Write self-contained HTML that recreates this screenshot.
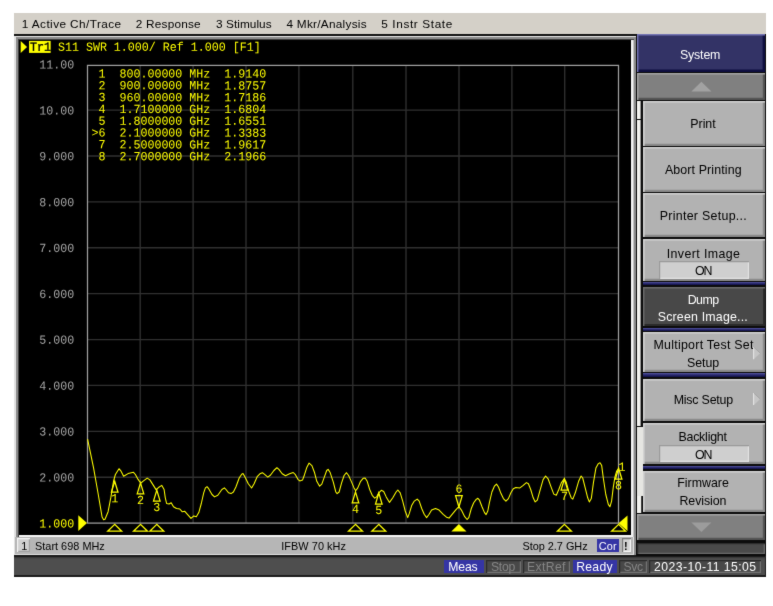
<!DOCTYPE html>
<html>
<head>
<meta charset="utf-8">
<title>E5071C Network Analyzer</title>
<style>
html,body{margin:0;padding:0;background:#fff;}
body{width:773px;height:606px;position:relative;overflow:hidden;font-family:"Liberation Sans",sans-serif;}
#all{position:absolute;left:0;top:0;width:773px;height:606px;background:#fff;filter:url(#soft);}
.b{position:absolute;}
svg{position:absolute;left:0;top:0;}
</style>
</head>
<body>
<svg width="0" height="0" style="position:absolute"><defs><filter id="soft" x="0" y="0" width="100%" height="100%" color-interpolation-filters="sRGB"><feConvolveMatrix order="3" kernelMatrix="0.012 0.07 0.012 0.07 0.672 0.07 0.012 0.07 0.012" divisor="1" edgeMode="duplicate" preserveAlpha="true"/></filter></defs></svg>
<div id="all">
<!-- outer black backing -->
<div class="b" style="left:14.00px;top:34.00px;width:752.10px;height:543.30px;background:#141414;"></div>
<!-- menu bar -->
<div class="b" style="left:14.00px;top:13.00px;width:752.10px;height:21.25px;background:#d4d0c8;"></div>
<!-- plot frame -->
<div class="b" style="left:14.00px;top:35.60px;width:621.70px;height:519.70px;background:#e2e2e2;"></div>
<div class="b" style="left:16.20px;top:37.30px;width:619.50px;height:499.30px;background:#8c8c8c;"></div>
<div class="b" style="left:17.60px;top:38.70px;width:616.60px;height:497.90px;background:#404040;"></div>
<div class="b" style="left:18.90px;top:40.10px;width:615.30px;height:496.50px;background:#c4c4c4;"></div>
<div class="b" style="left:18.90px;top:40.10px;width:613.80px;height:496.50px;background:#f4f4f4;"></div>
<div class="b" style="left:18.90px;top:40.10px;width:611.80px;height:494.90px;background:#000;"></div>
<div class="b" style="left:634.20px;top:536.60px;width:1.50px;height:18.70px;background:#8c8c8c;"></div>
<!-- channel bar -->
<div class="b" style="left:14.60px;top:536.60px;width:618.40px;height:17.20px;background:#b6b6b6;"></div>
<div class="b" style="left:16.80px;top:537.90px;width:13.50px;height:14.00px;background:#d0d0d0;box-shadow:inset 1.2px 1.2px 0 #f4f4f4,inset -1.2px -1.2px 0 #a2a2a2;"></div>
<div class="b" style="left:596.50px;top:539.00px;width:22.50px;height:12.90px;background:#3535a5;"></div>
<div class="b" style="left:621.60px;top:538.20px;width:9.40px;height:14.20px;background:#d2d2d2;box-shadow:inset 1.2px 1.2px 0 #7a7a7a,inset -1.2px -1.2px 0 #f6f6f6;"></div>
<!-- status bar -->
<div class="b" style="left:14.00px;top:555.40px;width:752.10px;height:21.90px;background:#1c1c1c;"></div>
<div class="b" style="left:14.00px;top:556.80px;width:750.90px;height:18.70px;background:#4e4e4e;box-shadow:inset 0 1.2px 0 #3a3a3a;"></div>
<div class="b" style="left:443.50px;top:559.80px;width:40.60px;height:13.30px;background:#3535a5;"></div>
<div class="b" style="left:486.20px;top:559.60px;width:34.50px;height:13.60px;background:#484848;box-shadow:inset 1.2px 1.2px 0 #2a2a2a,inset -1.2px -1.2px 0 #727272;"></div>
<div class="b" style="left:522.80px;top:559.60px;width:47.30px;height:13.60px;background:#484848;box-shadow:inset 1.2px 1.2px 0 #2a2a2a,inset -1.2px -1.2px 0 #727272;"></div>
<div class="b" style="left:572.80px;top:559.80px;width:44.40px;height:13.30px;background:#3535a5;"></div>
<div class="b" style="left:619.30px;top:559.60px;width:28.00px;height:13.60px;background:#484848;box-shadow:inset 1.2px 1.2px 0 #2a2a2a,inset -1.2px -1.2px 0 #727272;"></div>
<div class="b" style="left:649.30px;top:559.60px;width:111.80px;height:13.60px;background:#484848;box-shadow:inset 1.2px 1.2px 0 #2a2a2a,inset -1.2px -1.2px 0 #727272;"></div>
<!-- softkey column -->
<div class="b" style="left:635.70px;top:34.40px;width:130.40px;height:521.20px;background:#0c0c0c;"></div>
<div class="b" style="left:636.90px;top:34.40px;width:127.90px;height:38.00px;background:#333366;box-shadow:inset 1.4px 1.4px 0 #7474b4,inset -2.4px -2.4px 0 #0e0e40;"></div>
<div class="b" style="left:636.90px;top:72.90px;width:127.90px;height:27.20px;background:#808080;box-shadow:inset 1.4px 1.4px 0 #a4a4a4,inset -2.2px -2.2px 0 #555555;"></div>
<div class="b" style="left:636.90px;top:514.10px;width:127.90px;height:26.30px;background:#808080;box-shadow:inset 1.4px 1.4px 0 #a4a4a4,inset -2.2px -2.2px 0 #555555;"></div>
<div class="b" style="left:636.60px;top:543.00px;width:128.30px;height:11.20px;background:#4a4a4a;box-shadow:inset 1.3px 1.3px 0 #2c2c2c,inset -1.3px -1.3px 0 #6a6a6a;"></div>
<!-- scrollbar -->
<div class="b" style="left:636.90px;top:101.20px;width:4.40px;height:17.50px;background:#f2f2ee;box-shadow:inset -0.9px 0 0 #8c8c8c;"></div>
<div class="b" style="left:636.90px;top:119.60px;width:4.40px;height:306.40px;background:#f2f2ee;box-shadow:inset -0.9px 0 0 #8c8c8c;"></div>
<div class="b" style="left:636.90px;top:427.00px;width:5.70px;height:69.20px;background:#e6e6e2;"></div>
<div class="b" style="left:636.90px;top:496.20px;width:4.10px;height:16.80px;background:#f2f2ee;"></div>
<div class="b" style="left:641.00px;top:496.20px;width:1.40px;height:16.80px;background:#404040;"></div>
<div class="b" style="left:642.50px;top:101.00px;width:122.30px;height:44.60px;background:#b2b2b2;box-shadow:inset 1.6px 1.6px 0 #d2d2d2,inset -2.2px -2.2px 0 #8a8a8a;"></div>
<div class="b" style="left:642.50px;top:147.10px;width:122.30px;height:44.60px;background:#b2b2b2;box-shadow:inset 1.6px 1.6px 0 #d2d2d2,inset -2.2px -2.2px 0 #8a8a8a;"></div>
<div class="b" style="left:642.50px;top:193.10px;width:122.30px;height:44.40px;background:#b2b2b2;box-shadow:inset 1.6px 1.6px 0 #d2d2d2,inset -2.2px -2.2px 0 #8a8a8a;"></div>
<div class="b" style="left:642.50px;top:238.90px;width:122.30px;height:42.50px;background:#b2b2b2;box-shadow:inset 1.6px 1.6px 0 #d2d2d2,inset -2.2px -2.2px 0 #8a8a8a;"></div>
<div class="b" style="left:642.50px;top:286.90px;width:122.30px;height:39.50px;background:#484848;box-shadow:inset 1.4px 1.4px 0 #6c6c6c,inset -2.0px -2.0px 0 #2a2a2a;"></div>
<div class="b" style="left:642.50px;top:331.90px;width:122.30px;height:39.70px;background:#b2b2b2;box-shadow:inset 1.6px 1.6px 0 #d2d2d2,inset -2.2px -2.2px 0 #8a8a8a;"></div>
<div class="b" style="left:642.50px;top:379.00px;width:122.30px;height:42.00px;background:#b2b2b2;box-shadow:inset 1.6px 1.6px 0 #d2d2d2,inset -2.2px -2.2px 0 #8a8a8a;"></div>
<div class="b" style="left:642.50px;top:422.60px;width:122.30px;height:41.90px;background:#b2b2b2;box-shadow:inset 1.6px 1.6px 0 #d2d2d2,inset -2.2px -2.2px 0 #8a8a8a;"></div>
<div class="b" style="left:642.50px;top:470.90px;width:122.30px;height:41.50px;background:#b2b2b2;box-shadow:inset 1.6px 1.6px 0 #d2d2d2,inset -2.2px -2.2px 0 #8a8a8a;"></div>
<div class="b" style="left:642.50px;top:282.30px;width:122.30px;height:2.80px;background:linear-gradient(#5c5ca6 0%,#34347c 35%,#0e0e44 100%);"></div>
<div class="b" style="left:642.50px;top:327.70px;width:122.30px;height:2.90px;background:linear-gradient(#5c5ca6 0%,#34347c 35%,#0e0e44 100%);"></div>
<div class="b" style="left:642.50px;top:373.40px;width:122.30px;height:3.80px;background:linear-gradient(#5c5ca6 0%,#34347c 35%,#0e0e44 100%);"></div>
<div class="b" style="left:642.50px;top:466.00px;width:122.30px;height:3.30px;background:linear-gradient(#5c5ca6 0%,#34347c 35%,#0e0e44 100%);"></div>
<div class="b" style="left:659.00px;top:261.30px;width:90.40px;height:17.30px;background:#cfcfcf;box-shadow:inset 1.2px 1.2px 0 #9a9a9a,inset -1.2px -1.2px 0 #e2e2e2;"></div>
<div class="b" style="left:659.00px;top:445.10px;width:90.40px;height:17.20px;background:#cfcfcf;box-shadow:inset 1.2px 1.2px 0 #9a9a9a,inset -1.2px -1.2px 0 #e2e2e2;"></div>
<svg width="773" height="606" viewBox="0 0 773 606">
<g stroke="#303030" stroke-width="1.35" fill="none"><line x1="140.20" y1="65.40" x2="140.20" y2="523.10"/><line x1="87.50" y1="110.10" x2="618.50" y2="110.10"/><line x1="193.10" y1="65.40" x2="193.10" y2="523.10"/><line x1="87.50" y1="155.99" x2="618.50" y2="155.99"/><line x1="246.00" y1="65.40" x2="246.00" y2="523.10"/><line x1="87.50" y1="201.88" x2="618.50" y2="201.88"/><line x1="298.90" y1="65.40" x2="298.90" y2="523.10"/><line x1="87.50" y1="247.77" x2="618.50" y2="247.77"/><line x1="352.80" y1="65.40" x2="352.80" y2="523.10"/><line x1="87.50" y1="293.66" x2="618.50" y2="293.66"/><line x1="406.00" y1="65.40" x2="406.00" y2="523.10"/><line x1="87.50" y1="339.55" x2="618.50" y2="339.55"/><line x1="459.00" y1="65.40" x2="459.00" y2="523.10"/><line x1="87.50" y1="385.44" x2="618.50" y2="385.44"/><line x1="511.90" y1="65.40" x2="511.90" y2="523.10"/><line x1="87.50" y1="431.33" x2="618.50" y2="431.33"/><line x1="564.70" y1="65.40" x2="564.70" y2="523.10"/><line x1="87.50" y1="477.22" x2="618.50" y2="477.22"/></g>
<rect x="87.50" y="65.40" width="531.00" height="457.70" fill="none" stroke="#a0a0a0" stroke-width="1.25"/>
<text transform="translate(74.30,68.50) rotate(0.03) scale(1,1.06)" x="0" y="0" font-family="Liberation Mono, monospace" font-size="11.67" fill="#a4a4a4" text-anchor="end" xml:space="preserve"  >11.00</text>
<text transform="translate(74.30,114.40) rotate(0.03) scale(1,1.06)" x="0" y="0" font-family="Liberation Mono, monospace" font-size="11.67" fill="#a4a4a4" text-anchor="end" xml:space="preserve"  >10.00</text>
<text transform="translate(74.30,160.29) rotate(0.03) scale(1,1.06)" x="0" y="0" font-family="Liberation Mono, monospace" font-size="11.67" fill="#a4a4a4" text-anchor="end" xml:space="preserve"  >9.000</text>
<text transform="translate(74.30,206.18) rotate(0.03) scale(1,1.06)" x="0" y="0" font-family="Liberation Mono, monospace" font-size="11.67" fill="#a4a4a4" text-anchor="end" xml:space="preserve"  >8.000</text>
<text transform="translate(74.30,252.07) rotate(0.03) scale(1,1.06)" x="0" y="0" font-family="Liberation Mono, monospace" font-size="11.67" fill="#a4a4a4" text-anchor="end" xml:space="preserve"  >7.000</text>
<text transform="translate(74.30,297.96) rotate(0.03) scale(1,1.06)" x="0" y="0" font-family="Liberation Mono, monospace" font-size="11.67" fill="#a4a4a4" text-anchor="end" xml:space="preserve"  >6.000</text>
<text transform="translate(74.30,343.85) rotate(0.03) scale(1,1.06)" x="0" y="0" font-family="Liberation Mono, monospace" font-size="11.67" fill="#a4a4a4" text-anchor="end" xml:space="preserve"  >5.000</text>
<text transform="translate(74.30,389.74) rotate(0.03) scale(1,1.06)" x="0" y="0" font-family="Liberation Mono, monospace" font-size="11.67" fill="#a4a4a4" text-anchor="end" xml:space="preserve"  >4.000</text>
<text transform="translate(74.30,435.63) rotate(0.03) scale(1,1.06)" x="0" y="0" font-family="Liberation Mono, monospace" font-size="11.67" fill="#a4a4a4" text-anchor="end" xml:space="preserve"  >3.000</text>
<text transform="translate(74.30,481.52) rotate(0.03) scale(1,1.06)" x="0" y="0" font-family="Liberation Mono, monospace" font-size="11.67" fill="#a4a4a4" text-anchor="end" xml:space="preserve"  >2.000</text>
<text transform="translate(74.30,527.41) rotate(0.03) scale(1,1.06)" x="0" y="0" font-family="Liberation Mono, monospace" font-size="11.67" fill="#ffff00" text-anchor="end" xml:space="preserve"  >1.000</text>
<polygon points="78.3,515.3 87.0,523.1 78.3,530.9" fill="#ffff00"/>
<polygon points="20.7,40.9 27.1,46.9 20.7,52.9" fill="#ffff00"/>
<rect x="29.05" y="40.9" width="21.6" height="12" fill="#ffff00"/>
<text transform="translate(29.90,50.70) rotate(0.03) scale(1,1.06)" x="0" y="0" font-family="Liberation Mono, monospace" font-size="11.67" fill="#000" text-anchor="start" xml:space="preserve"  stroke="#000" stroke-width="0.35">Tr1</text>
<text transform="translate(29.90,50.70) rotate(0.03) scale(1,1.06)" x="0" y="0" font-family="Liberation Mono, monospace" font-size="11.67" fill="#ffff00" text-anchor="start" xml:space="preserve"  >    S11 SWR 1.000/ Ref 1.000 [F1]</text>
<text transform="translate(91.40,77.50) rotate(0.03) scale(1,1.06)" x="0" y="0" font-family="Liberation Mono, monospace" font-size="11.67" fill="#ffff00" text-anchor="start" xml:space="preserve"  > 1  800.00000 MHz  1.9140</text>
<text transform="translate(91.40,89.31) rotate(0.03) scale(1,1.06)" x="0" y="0" font-family="Liberation Mono, monospace" font-size="11.67" fill="#ffff00" text-anchor="start" xml:space="preserve"  > 2  900.00000 MHz  1.8757</text>
<text transform="translate(91.40,101.12) rotate(0.03) scale(1,1.06)" x="0" y="0" font-family="Liberation Mono, monospace" font-size="11.67" fill="#ffff00" text-anchor="start" xml:space="preserve"  > 3  960.00000 MHz  1.7186</text>
<text transform="translate(91.40,112.93) rotate(0.03) scale(1,1.06)" x="0" y="0" font-family="Liberation Mono, monospace" font-size="11.67" fill="#ffff00" text-anchor="start" xml:space="preserve"  > 4  1.7100000 GHz  1.6804</text>
<text transform="translate(91.40,124.74) rotate(0.03) scale(1,1.06)" x="0" y="0" font-family="Liberation Mono, monospace" font-size="11.67" fill="#ffff00" text-anchor="start" xml:space="preserve"  > 5  1.8000000 GHz  1.6551</text>
<text transform="translate(91.40,136.55) rotate(0.03) scale(1,1.06)" x="0" y="0" font-family="Liberation Mono, monospace" font-size="11.67" fill="#ffff00" text-anchor="start" xml:space="preserve"  >&gt;6  2.1000000 GHz  1.3383</text>
<text transform="translate(91.40,148.36) rotate(0.03) scale(1,1.06)" x="0" y="0" font-family="Liberation Mono, monospace" font-size="11.67" fill="#ffff00" text-anchor="start" xml:space="preserve"  > 7  2.5000000 GHz  1.9617</text>
<text transform="translate(91.40,160.17) rotate(0.03) scale(1,1.06)" x="0" y="0" font-family="Liberation Mono, monospace" font-size="11.67" fill="#ffff00" text-anchor="start" xml:space="preserve"  > 8  2.7000000 GHz  2.1966</text>
<polyline points="87.6,439.1 93.6,468.1 98.1,493.5 102.1,517.1 103.6,519.8 105.0,519.3 108.1,511.7 110.9,497.2 113.6,480.8 115.4,474.5 119.0,468.7 120.8,470.8 123.6,476.3 128.1,473.6 133.5,472.3 135.4,474.5 138.1,479.4 140.8,483.2 143.5,480.8 147.2,478.1 149.9,479.9 152.6,484.1 156.2,489.9 158.9,487.2 161.8,485.4 164.1,489.5 165.3,497.8 166.6,503.5 169.1,504.0 171.2,502.7 173.5,506.8 176.5,508.5 179.8,509.0 182.3,511.8 184.8,511.3 188.1,515.1 191.0,518.4 193.8,515.9 196.3,516.7 198.8,512.6 201.3,503.5 203.7,492.8 205.4,487.9 207.0,486.7 208.7,488.7 212.0,494.5 214.5,496.9 217.8,495.3 221.9,489.5 224.4,487.9 226.0,489.5 228.5,492.8 231.0,493.6 233.4,492.0 235.9,487.0 239.2,478.0 241.7,474.2 243.0,473.5 245.0,477.1 248.3,483.7 251.6,488.0 254.1,483.7 257.4,476.3 259.9,473.8 262.4,472.7 264.9,474.7 267.8,477.1 270.6,475.0 273.9,470.5 276.9,467.7 278.9,469.4 282.2,473.8 285.5,475.8 289.6,473.8 293.2,472.5 295.4,474.7 297.9,479.3 299.8,480.9 302.5,480.1 304.5,474.7 306.9,467.2 309.1,463.1 311.9,465.6 314.4,472.2 316.8,481.3 319.6,486.2 321.8,484.2 324.3,477.1 326.7,470.5 328.1,469.4 330.0,472.2 333.3,482.1 335.8,492.0 337.1,493.6 339.1,492.0 341.6,482.9 344.1,475.5 346.5,472.7 348.6,475.5 351.6,482.1 354.0,487.9 355.7,490.8 357.8,487.9 360.6,481.3 363.1,478.3 365.1,478.0 367.2,481.3 369.7,489.5 372.2,495.3 374.7,498.1 376.6,496.9 378.8,492.8 381.3,490.3 383.7,491.5 386.2,496.9 389.5,502.4 392.8,497.8 396.1,492.0 397.8,490.0 400.2,492.8 402.7,501.1 405.2,511.0 407.7,517.6 409.3,513.4 411.8,505.2 414.3,501.1 417.2,499.1 419.2,501.1 421.7,508.5 424.2,514.3 426.6,517.6 429.1,514.3 431.6,510.1 435.5,508.5 439.1,510.1 443.2,514.3 446.5,517.2 449.0,518.1 451.5,515.1 455.6,510.1 458.9,506.5 461.4,510.1 464.7,516.7 467.1,519.5 468.8,517.6 471.3,508.5 473.7,502.7 476.2,499.4 477.9,498.3 479.5,500.2 482.0,506.8 484.5,512.6 486.1,514.6 487.8,511.0 489.4,502.7 491.9,492.0 494.4,486.2 496.5,484.1 498.5,487.0 501.0,493.6 503.4,498.6 505.9,501.1 508.4,498.6 510.9,492.8 513.3,488.7 515.8,487.5 519.9,487.9 523.2,485.4 526.4,482.6 528.4,483.7 530.7,489.5 533.2,497.8 535.2,501.9 537.3,500.2 539.8,491.2 543.1,479.6 545.6,476.0 548.1,478.8 551.4,487.9 553.8,494.1 556.3,495.3 558.8,489.5 561.3,482.9 564.2,478.8 566.2,482.1 568.7,491.2 571.2,497.8 572.8,499.1 575.3,492.8 578.6,481.3 581.1,476.0 582.7,478.0 585.2,487.9 587.7,497.8 589.3,501.9 591.3,498.6 593.4,482.9 595.9,468.1 598.4,463.6 600.0,462.8 601.7,465.6 603.3,478.0 605.8,494.5 608.3,504.4 609.9,506.8 611.6,501.1 613.2,487.9 614.9,477.1 616.7,471.0 618.8,468.2" fill="none" stroke="#ffff00" stroke-width="1.05" stroke-linejoin="round"/>
<polygon points="114.7,481.2 111.4,492.2 118.0,492.2" fill="none" stroke="#ffff00" stroke-width="1.25"/>
<text transform="translate(114.70,502.20) rotate(0.03) scale(1,1.06)" x="0" y="0" font-family="Liberation Mono, monospace" font-size="11.67" fill="#ffff00" text-anchor="middle" xml:space="preserve"  >1</text>
<polygon points="114.7,524.4 107.7,531.2 121.7,531.2" fill="none" stroke="#ffff00" stroke-width="1.25"/>
<polygon points="140.5,482.9 137.2,493.9 143.8,493.9" fill="none" stroke="#ffff00" stroke-width="1.25"/>
<text transform="translate(140.50,503.90) rotate(0.03) scale(1,1.06)" x="0" y="0" font-family="Liberation Mono, monospace" font-size="11.67" fill="#ffff00" text-anchor="middle" xml:space="preserve"  >2</text>
<polygon points="140.5,524.4 133.5,531.2 147.5,531.2" fill="none" stroke="#ffff00" stroke-width="1.25"/>
<polygon points="156.8,490.1 153.5,501.1 160.1,501.1" fill="none" stroke="#ffff00" stroke-width="1.25"/>
<text transform="translate(156.80,511.10) rotate(0.03) scale(1,1.06)" x="0" y="0" font-family="Liberation Mono, monospace" font-size="11.67" fill="#ffff00" text-anchor="middle" xml:space="preserve"  >3</text>
<polygon points="156.8,524.4 149.8,531.2 163.8,531.2" fill="none" stroke="#ffff00" stroke-width="1.25"/>
<polygon points="355.5,491.9 352.2,502.9 358.8,502.9" fill="none" stroke="#ffff00" stroke-width="1.25"/>
<text transform="translate(355.50,512.90) rotate(0.03) scale(1,1.06)" x="0" y="0" font-family="Liberation Mono, monospace" font-size="11.67" fill="#ffff00" text-anchor="middle" xml:space="preserve"  >4</text>
<polygon points="355.5,524.4 348.5,531.2 362.5,531.2" fill="none" stroke="#ffff00" stroke-width="1.25"/>
<polygon points="378.8,493.0 375.5,504.0 382.1,504.0" fill="none" stroke="#ffff00" stroke-width="1.25"/>
<text transform="translate(378.80,514.00) rotate(0.03) scale(1,1.06)" x="0" y="0" font-family="Liberation Mono, monospace" font-size="11.67" fill="#ffff00" text-anchor="middle" xml:space="preserve"  >5</text>
<polygon points="378.8,524.4 371.8,531.2 385.8,531.2" fill="none" stroke="#ffff00" stroke-width="1.25"/>
<polygon points="458.9,507.0 455.6,495.6 462.2,495.6" fill="none" stroke="#ffff00" stroke-width="1.25"/>
<text transform="translate(458.90,492.80) rotate(0.03) scale(1,1.06)" x="0" y="0" font-family="Liberation Mono, monospace" font-size="11.67" fill="#ffff00" text-anchor="middle" xml:space="preserve"  >6</text>
<polygon points="458.9,524.0 451.3,531.6 466.5,531.6" fill="#ffff00"/>
<polygon points="564.4,479.0 561.1,490.0 567.7,490.0" fill="none" stroke="#ffff00" stroke-width="1.25"/>
<text transform="translate(564.40,500.00) rotate(0.03) scale(1,1.06)" x="0" y="0" font-family="Liberation Mono, monospace" font-size="11.67" fill="#ffff00" text-anchor="middle" xml:space="preserve"  >7</text>
<polygon points="564.4,524.4 557.4,531.2 571.4,531.2" fill="none" stroke="#ffff00" stroke-width="1.25"/>
<polygon points="618.6,468.2 615.3,479.2 621.9,479.2" fill="none" stroke="#ffff00" stroke-width="1.25"/>
<text transform="translate(618.60,489.20) rotate(0.03) scale(1,1.06)" x="0" y="0" font-family="Liberation Mono, monospace" font-size="11.67" fill="#ffff00" text-anchor="middle" xml:space="preserve"  >8</text>
<polygon points="618.6,524.4 611.6,531.2 625.6,531.2" fill="none" stroke="#ffff00" stroke-width="1.25"/>
<text transform="translate(618.60,470.80) rotate(0.03) scale(1,1.06)" x="0" y="0" font-family="Liberation Mono, monospace" font-size="11.67" fill="#ffff00" text-anchor="start" xml:space="preserve"  >1</text>
<polygon points="618.5,523.3 627.5,515.4 627.5,530.9" fill="#ffff00"/>
<text x="21.80" y="28.00" textLength="99.30" lengthAdjust="spacing" font-family="Liberation Sans, sans-serif" font-size="11.8" fill="#000" >1 Active Ch/Trace</text>
<text x="135.80" y="28.00" textLength="64.80" lengthAdjust="spacing" font-family="Liberation Sans, sans-serif" font-size="11.8" fill="#000" >2 Response</text>
<text x="216.10" y="28.00" textLength="55.50" lengthAdjust="spacing" font-family="Liberation Sans, sans-serif" font-size="11.8" fill="#000" >3 Stimulus</text>
<text x="286.50" y="28.00" textLength="80.10" lengthAdjust="spacing" font-family="Liberation Sans, sans-serif" font-size="11.8" fill="#000" >4 Mkr/Analysis</text>
<text x="381.30" y="28.00" textLength="71.00" lengthAdjust="spacing" font-family="Liberation Sans, sans-serif" font-size="11.8" fill="#000" >5 Instr State</text>
<text x="679.95" y="58.70" textLength="40.50" lengthAdjust="spacing" font-family="Liberation Sans, sans-serif" font-size="12.4" fill="#fff" >System</text>
<text x="690.30" y="128.00" textLength="25.40" lengthAdjust="spacing" font-family="Liberation Sans, sans-serif" font-size="12.4" fill="#000" >Print</text>
<text x="664.90" y="173.70" textLength="76.70" lengthAdjust="spacing" font-family="Liberation Sans, sans-serif" font-size="12.4" fill="#000" >Abort Printing</text>
<text x="659.75" y="219.70" textLength="87.00" lengthAdjust="spacing" font-family="Liberation Sans, sans-serif" font-size="12.4" fill="#000" >Printer Setup...</text>
<text x="666.70" y="257.90" textLength="73.30" lengthAdjust="spacing" font-family="Liberation Sans, sans-serif" font-size="12.4" fill="#000" >Invert Image</text>
<text x="695.00" y="275.20" textLength="17.50" lengthAdjust="spacing" font-family="Liberation Sans, sans-serif" font-size="12.4" fill="#000" >ON</text>
<text x="687.70" y="303.50" textLength="31.50" lengthAdjust="spacing" font-family="Liberation Sans, sans-serif" font-size="12.4" fill="#fff" >Dump</text>
<text x="657.70" y="321.00" textLength="90.10" lengthAdjust="spacing" font-family="Liberation Sans, sans-serif" font-size="12.4" fill="#fff" >Screen Image...</text>
<text x="653.50" y="349.40" textLength="99.90" lengthAdjust="spacing" font-family="Liberation Sans, sans-serif" font-size="12.4" fill="#000" >Multiport Test Set</text>
<text x="686.90" y="367.10" textLength="32.30" lengthAdjust="spacing" font-family="Liberation Sans, sans-serif" font-size="12.4" fill="#000" >Setup</text>
<text x="673.70" y="403.50" textLength="59.50" lengthAdjust="spacing" font-family="Liberation Sans, sans-serif" font-size="12.4" fill="#000" >Misc Setup</text>
<text x="678.40" y="441.30" textLength="48.60" lengthAdjust="spacing" font-family="Liberation Sans, sans-serif" font-size="12.4" fill="#000" >Backlight</text>
<text x="695.00" y="458.60" textLength="17.50" lengthAdjust="spacing" font-family="Liberation Sans, sans-serif" font-size="12.4" fill="#000" >ON</text>
<text x="677.30" y="487.00" textLength="51.60" lengthAdjust="spacing" font-family="Liberation Sans, sans-serif" font-size="12.4" fill="#000" >Firmware</text>
<text x="679.50" y="504.60" textLength="47.00" lengthAdjust="spacing" font-family="Liberation Sans, sans-serif" font-size="12.4" fill="#000" >Revision</text>
<text x="21.3" y="549.9" font-family="Liberation Sans, sans-serif" font-size="10.9" fill="#000">1</text>
<text x="35.00" y="549.90" textLength="69.80" lengthAdjust="spacing" font-family="Liberation Sans, sans-serif" font-size="10.9" fill="#000" >Start 698 MHz</text>
<text x="281.20" y="549.90" textLength="64.80" lengthAdjust="spacing" font-family="Liberation Sans, sans-serif" font-size="10.9" fill="#000" >IFBW 70 kHz</text>
<text x="522.45" y="549.90" textLength="65.20" lengthAdjust="spacing" font-family="Liberation Sans, sans-serif" font-size="10.9" fill="#000" >Stop 2.7 GHz</text>
<text x="598.85" y="549.90" textLength="17.85" lengthAdjust="spacing" font-family="Liberation Sans, sans-serif" font-size="10.9" fill="#fff" >Cor</text>
<text x="623.9" y="549.9" font-family="Liberation Sans, sans-serif" font-size="10.9" font-weight="bold" fill="#000">!</text>
<text x="448.30" y="570.80" textLength="29.40" lengthAdjust="spacing" font-family="Liberation Sans, sans-serif" font-size="12.2" fill="#fff" >Meas</text>
<text x="491.00" y="570.80" textLength="24.20" lengthAdjust="spacing" font-family="Liberation Sans, sans-serif" font-size="12.2" fill="#858585" >Stop</text>
<text x="527.10" y="570.80" textLength="38.40" lengthAdjust="spacing" font-family="Liberation Sans, sans-serif" font-size="12.2" fill="#858585" >ExtRef</text>
<text x="576.30" y="570.80" textLength="36.20" lengthAdjust="spacing" font-family="Liberation Sans, sans-serif" font-size="12.2" fill="#fff" >Ready</text>
<text x="623.50" y="570.80" textLength="19.60" lengthAdjust="spacing" font-family="Liberation Sans, sans-serif" font-size="12.2" fill="#858585" >Svc</text>
<text x="654.10" y="570.80" textLength="101.90" lengthAdjust="spacing" font-family="Liberation Sans, sans-serif" font-size="12.2" fill="#fff" >2023-10-11 15:05</text>
<polygon points="701.4,81.8 691.4,91.4 711.4,91.4" fill="#a2a2a2"/>
<polygon points="701.4,532.0 691.4,522.6 711.4,522.6" fill="#9c9c9c"/>
<polygon points="753.9,347.3 760.2,353.2 753.9,359.1" fill="#c6c6c6"/>
<line x1="753.6" y1="347.2" x2="753.6" y2="359.2" stroke="#e4e4e4" stroke-width="1.1"/>
<line x1="753.9" y1="347.2" x2="760.3" y2="353.2" stroke="#a0a0a0" stroke-width="0.8"/>
<polygon points="753.9,393.2 760.2,399.1 753.9,405.0" fill="#c6c6c6"/>
<line x1="753.6" y1="393.1" x2="753.6" y2="405.1" stroke="#e4e4e4" stroke-width="1.1"/>
<line x1="753.9" y1="393.1" x2="760.3" y2="399.1" stroke="#a0a0a0" stroke-width="0.8"/>
</svg>
</div>
</body>
</html>
